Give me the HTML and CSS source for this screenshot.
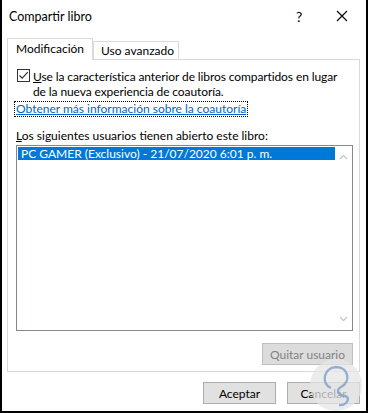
FILE: index.html
```html
<!DOCTYPE html>
<html lang="es">
<head>
    <meta charset="UTF-8">
    <title>Compartir libro</title>
    <link rel="stylesheet" href="styles.css">
</head>
<body>
    <div class="window">

        <!-- title bar -->
        <div class="titlebar">
            <span class="title">Compartir libro</span>
            <span class="help">?</span>
            <span class="close">
                <svg width="12" height="12" viewBox="0 0 12 12">
                    <path d="M1 1 L11 11 M11 1 L1 11" stroke="#000" stroke-width="1.1" fill="none"/>
                </svg>
            </span>
        </div>

        <div class="content">
            <!-- tabs -->
            <div class="tabs">
                <div class="tab active">Modificación</div>
                <div class="tab">Uso avanzado</div>
            </div>

            <div class="panel">
                <div class="check-row">
                    <span class="checkbox">
                        <svg width="11" height="11" viewBox="0 0 11 11">
                            <path d="M1.5 5.5 L4.2 8.2 L9.8 2.2" stroke="#333" stroke-width="1.2" fill="none"/>
                        </svg>
                    </span>
                    <span class="check-text"><u>U</u>se la característica anterior de libros compartidos en lugar<br>de la nueva experiencia de coautoría.</span>
                </div>

                <div class="link-wrap">
                    <a class="link" href="#">Obtener más información sobre la coautoría</a>
                </div>

                <div class="list-label"><u>L</u>os siguientes usuarios tienen abierto este libro:</div>

                <div class="listbox">
                    <div class="list-items">
                        <div class="list-item selected">PC GAMER (Exclusivo) - 21/07/2020 6:01 p. m.</div>
                    </div>
                    <div class="scrollbar">
                        <svg width="9" height="6" viewBox="0 0 9 6"><path d="M1 5 L4.5 1.5 L8 5" stroke="#c8c8c8" stroke-width="1.3" fill="none"/></svg>
                        <svg width="9" height="6" viewBox="0 0 9 6"><path d="M1 1 L4.5 4.5 L8 1" stroke="#c8c8c8" stroke-width="1.3" fill="none"/></svg>
                    </div>
                </div>

                <div class="panel-actions">
                    <button class="btn disabled">Quitar usuario</button>
                </div>
            </div>

            <div class="footer">
                <button class="btn">Aceptar</button>
                <button class="btn">Cancelar</button>
            </div>
        </div>

        <!-- watermark -->
        <svg class="watermark" width="54" height="54" viewBox="0 0 54 54">
            <circle cx="27" cy="27" r="26" fill="#e6e6e6" fill-opacity="0.75"/>
            <path d="M22 30 C12 26 14 10 27 9 C40 9 42 24 32 29 C26 32 30 38 36 38 C42 39 38 48 30 47"
                  stroke="#7f9fc9" stroke-width="2.4" fill="none" stroke-opacity="0.8"/>
        </svg>
    </div>
</body>
</html>
```

FILE: styles.css
```css
body {
    margin: 0;
    background-color: #fff;
    font-family: Lato, "Liberation Sans", sans-serif;
    font-size: 12px;
    line-height: 15px;
    color: #000;
}

.window {
    position: relative;
    width: 368px;
    height: 413px;
    box-sizing: border-box;
    border: 2px solid #000;
    border-top: none;
    background-color: #fff;
    overflow: hidden;
}

/* ---- title bar ---- */
.titlebar {
    display: flex;
    align-items: center;
    height: 32px;
    padding-left: 7px;
}

.title {
    flex: 1;
    font-size: 12.5px;
}

.help {
    width: 40px;
    text-align: left;
    font-size: 14px;
}

.close {
    width: 30px;
    display: flex;
    align-items: center;
}

/* ---- content ---- */
.content {
    padding: 6px 6px 0 5px;
}

.tabs {
    display: flex;
    align-items: flex-end;
    height: 21px;
}

.tab {
    box-sizing: border-box;
    width: 86px;
    height: 18px;
    padding-left: 7px;
    border: 1px solid #d9d9d9;
    border-bottom: none;
    line-height: 17px;
    white-space: nowrap;
    background-color: #fff;
}

.tab.active {
    height: 22px;
    padding-left: 8px;
    margin-bottom: -1px;
    position: relative;
    line-height: 20px;
}

.panel {
    box-sizing: border-box;
    height: 313px;
    border: 1px solid #d9d9d9;
    padding: 9px 6px 0 8px;
    display: flex;
    flex-direction: column;
}

.check-row {
    display: flex;
    gap: 3px;
    height: 30px;
    padding-left: 1px;
}

.checkbox {
    flex: none;
    box-sizing: border-box;
    width: 13px;
    height: 13px;
    border: 1px solid #333;
    display: flex;
    align-items: center;
    justify-content: center;
}

.check-text {
    white-space: nowrap;
    letter-spacing: -0.1px;
}

.link-wrap {
    display: flex;
    height: 16px;
    margin-top: 2px;
    margin-left: -2px;
}

.link {
    display: block;
    color: #0066cc;
    outline: 1px dotted #000;
    outline-offset: -1px;
    padding: 0 2px;
    line-height: 16px;
}

.list-label {
    height: 15px;
    margin-top: 11px;
}

.listbox {
    flex: none;
    margin-top: 2px;
    display: flex;
    box-sizing: border-box;
    height: 186px;
    border: 1px solid #828790;
}

.list-items {
    flex: 1;
    padding: 1px 0 0 1px;
}

.list-item {
    line-height: 13px;
    padding-left: 3px;
    white-space: nowrap;
}

.list-item.selected {
    background-color: #0078d7;
    color: #fff;
}

.scrollbar {
    width: 17px;
    display: flex;
    flex-direction: column;
    justify-content: space-between;
    align-items: center;
    padding: 8px 0 8px;
}

.panel-actions {
    display: flex;
    justify-content: flex-end;
    margin-top: 12px;
}

.btn {
    box-sizing: border-box;
    width: 73px;
    height: 22px;
    border: 1px solid #adadad;
    background-color: #e1e1e1;
    font-family: inherit;
    font-size: 12px;
    color: #000;
    padding: 0;
}

.btn.disabled {
    width: 91px;
    border-color: #bfbfbf;
    background-color: #dcdcdc;
    color: #838383;
}

.footer {
    display: flex;
    justify-content: flex-end;
    gap: 11px;
    margin-top: 10px;
}

.watermark {
    position: absolute;
    left: 307px;
    top: 358px;
}
```
